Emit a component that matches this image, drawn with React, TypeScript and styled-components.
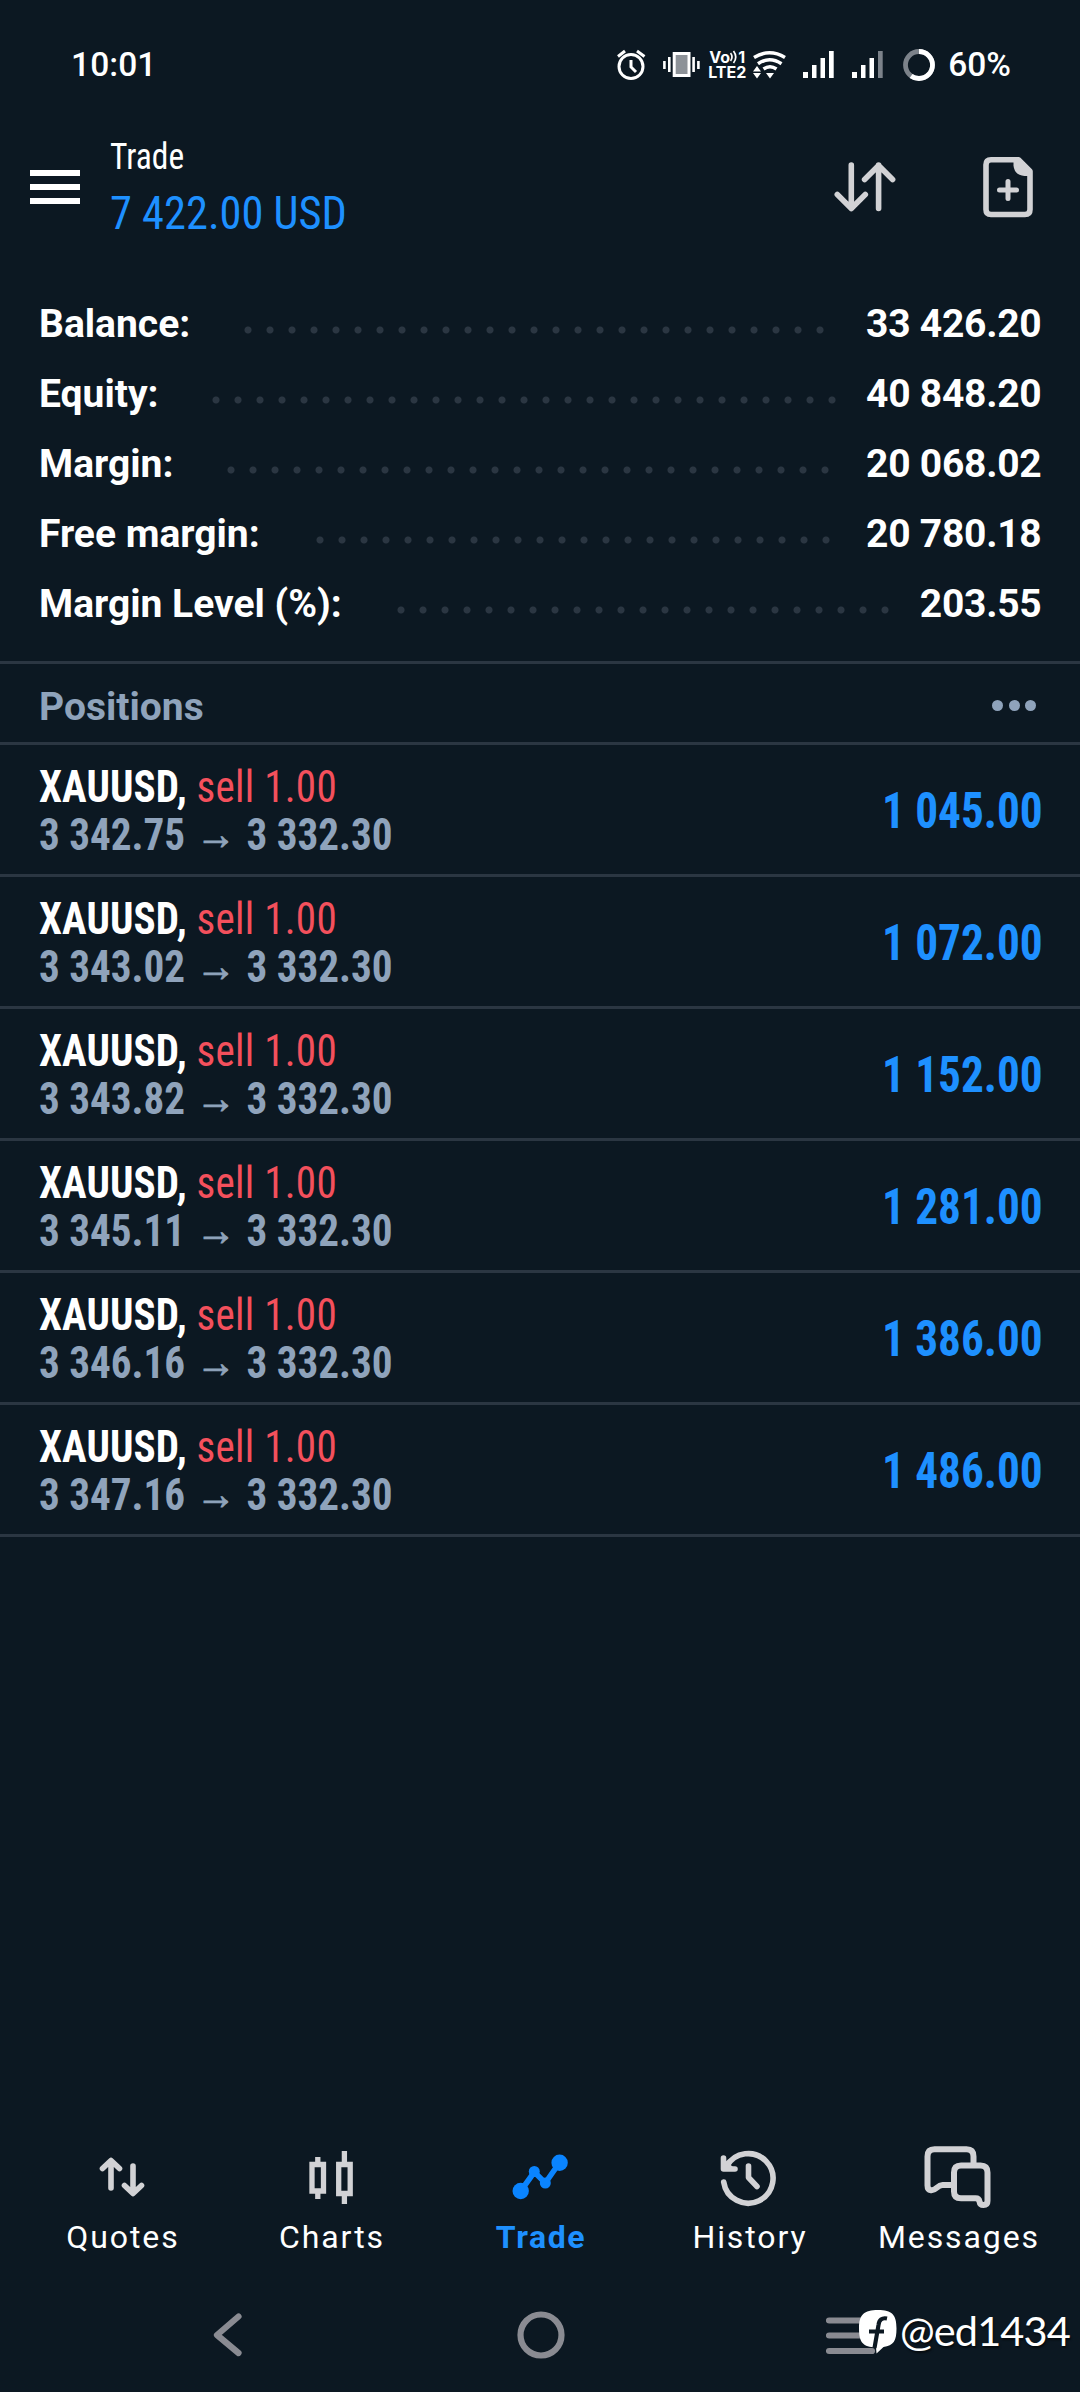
import React from "react";
import styled, { createGlobalStyle } from "styled-components";

const colors = {
  bg: "#0c1822",
  line: "#2b3642",
  blue: "#1e90ff",
  red: "#f4505c",
  muted: "#8fa3bb",
  icon: "#d2d2d5",
  nav: "#8a8b92",
};

const Global = createGlobalStyle`
  * { box-sizing: border-box; }
  body { margin: 0; background: ${colors.bg}; }
`;

const Screen = styled.div`
  display: flex;
  flex-direction: column;
  width: 1080px;
  height: 2392px;
  overflow: hidden;
  background: ${colors.bg};
  color: #fff;
  font-family: Roboto, "Noto Sans", sans-serif;
  white-space: nowrap;

  svg { display: block; flex: none; }
`;

/* ---------- status bar ---------- */

const StatusBar = styled.header`
  display: flex;
  align-items: center;
  justify-content: space-between;
  height: 129px;
  padding: 0 69px 0 71px;
  font-size: 33.5px;
  font-weight: 500;
`;

const Clock = styled.span`
  letter-spacing: 0.1px;
`;

const StatusIcons = styled.div`
  display: flex;
  align-items: center;
`;

const StatusSlot = styled.span<{ $before?: number }>`
  margin-left: ${(p) => p.$before ?? 0}px;
`;

/* ---------- header ---------- */

const Header = styled.div`
  display: flex;
  align-items: center;
  height: 116px;
  padding: 0 44px 0 30px;
`;

const Burger = styled.div`
  display: flex;
  flex-direction: column;
  gap: 8px;
  width: 50px;
  margin-right: 30px;
`;

const BurgerBar = styled.span`
  height: 6px;
  background: #fff;
`;

const Heading = styled.div`
  flex: 1;
  font-family: "Roboto Condensed", Roboto, sans-serif;
`;

const Title = styled.div`
  font-size: 36px;
  line-height: 52px;
  transform: scaleX(0.93);
  transform-origin: left;
`;

const Profit = styled.div`
  font-size: 46.5px;
  line-height: 60px;
  color: ${colors.blue};
  transform: scaleX(0.955);
  transform-origin: left;
`;

const HeaderIcons = styled.div`
  display: flex;
  align-items: center;
  gap: 86px;
`;

/* ---------- account summary ---------- */

const Summary = styled.section`
  padding: 44px 38.5px 22px 39px;
  border-bottom: 3px solid ${colors.line};
`;

const SummaryRow = styled.div`
  display: flex;
  align-items: center;
  height: 70px;
  font-size: 39px;
  font-weight: 700;
`;

const SummaryLabel = styled.span<{ $width: number }>`
  width: ${(p) => p.$width}px;
`;

const Leader = styled.span<{ $dots: number }>`
  width: ${(p) => p.$dots * 22}px;
  height: 8px;
  margin-top: 12px;
  background: radial-gradient(circle at 4px 4px, ${colors.line} 3px, transparent 4px) 0 0 / 22px 8px repeat-x;
`;

const SummaryValue = styled.span`
  margin-left: auto;
  letter-spacing: -0.25px;
`;

/* ---------- positions ---------- */

const SectionHead = styled.div`
  display: flex;
  align-items: center;
  justify-content: space-between;
  height: 81px;
  padding: 8px 44px 0 39px;
  border-bottom: 3px solid ${colors.line};
  color: ${colors.muted};
  font-size: 39px;
  font-weight: 700;
`;

const More = styled.div`
  display: flex;
  gap: 5.5px;
  margin-top: -4px;
`;

const MoreDot = styled.span`
  width: 11px;
  height: 11px;
  border-radius: 50%;
  background: ${colors.muted};
`;

const PositionRow = styled.div`
  display: flex;
  align-items: center;
  justify-content: space-between;
  height: 132px;
  padding: 3px 37px 0 39px;
  border-bottom: 3px solid ${colors.line};
  font-family: "Roboto Condensed", Roboto, sans-serif;
  font-weight: 700;
`;

const Deal = styled.div`
  font-size: 45px;
  line-height: 48px;
  transform: scaleX(0.914);
  transform-origin: left;
`;

const Symbol = styled.div`
  letter-spacing: 0.1px;
`;

const Side = styled.span`
  color: ${colors.red};
  font-weight: 400;
  letter-spacing: 0.3px;
`;

const Prices = styled.div`
  display: flex;
  color: ${colors.muted};
`;

const Arrow = styled.span`
  width: 67px;
  text-align: center;
  font-size: 44px;
  line-height: 47px;
  -webkit-text-stroke: 0.9px ${colors.muted};
`;

const Gain = styled.div`
  color: ${colors.blue};
  font-size: 50px;
  transform: scaleX(0.905);
  transform-origin: right;
`;

/* ---------- bottom bars ---------- */

const Spacer = styled.div`
  flex: 1;
`;

const Tabs = styled.nav`
  display: grid;
  grid-template-columns: repeat(5, 209px);
  justify-content: center;
`;

const Tab = styled.div<{ $active?: boolean }>`
  display: flex;
  flex-direction: column;
  align-items: center;
  gap: 4px;
  font-size: 32px;
  line-height: 40px;
  letter-spacing: ${(p) => (p.$active ? 1.6 : 1.9)}px;
  font-weight: ${(p) => (p.$active ? 700 : 400)};
  color: ${(p) => (p.$active ? colors.blue : "#fff")};
`;

const TabLabel = styled.span`
  padding-left: 2px;
`;

const SystemNav = styled.div`
  position: relative;
  display: flex;
  align-items: center;
  justify-content: space-between;
  height: 115px;
  margin-top: 20px;
  padding: 0 204px 0 207px;
`;

const Watermark = styled.div`
  position: absolute;
  left: 859px;
  top: 33px;
  display: flex;
  align-items: center;
  gap: 3px;
  text-shadow: 1px 2px 2px rgba(0, 0, 0, 0.6);
`;

const Handle = styled.span`
  margin-top: -5px;
  font-family: Lato, sans-serif;
  font-size: 41.5px;
  line-height: 48px;
  letter-spacing: -0.9px;
`;

/* ---------- icons ---------- */

const AlarmIcon = () => (
  <svg width="30" height="32" viewBox="615 48 30 32" fill="none" stroke="#fff" strokeWidth="3">
    <circle cx="630" cy="65.5" r="12" />
    <path d="M617 55.5l7-5.5M636 50l7.5 5.5M630 59v7l5 5" />
  </svg>
);

const VibrateIcon = () => (
  <svg width="38" height="28" viewBox="661 51 38 28" fill="none" stroke="#fff">
    <rect x="673.2" y="53.5" width="14.8" height="22" strokeWidth="3" fill="#8d9298" />
    <path d="M668.3 57v15M692.6 57v15" strokeWidth="2.6" />
    <path d="M663.4 61v8M697.4 61v8" strokeWidth="2.6" />
  </svg>
);

const Volte = styled.span`
  display: flex;
  flex-direction: column;
  width: 38px;
  font-family: Inter, sans-serif;
  font-size: 16px;
  line-height: 15px;
  font-weight: 700;
`;

const VolteTop = styled.span`
  display: flex;
  align-items: center;
  justify-content: space-between;
  padding: 0 1px;
`;

const VolteIcon = () => (
  <Volte>
    <VolteTop>
      <span>Vo</span>
      <svg width="8" height="14" viewBox="0 0 8 14" fill="none" stroke="#fff" strokeWidth="1.7">
        <path d="M0.500 3q3 4 0 8M3.500 1q4.500 6 0 12" />
      </svg>
      <span>1</span>
    </VolteTop>
    <span>LTE2</span>
  </Volte>
);

const WifiIcon = () => (
  <svg width="34" height="30" viewBox="751 50 34 30" fill="none" stroke="#fff" strokeWidth="3.5">
    <path d="M753 57.500q15.500-9.500 31 0M757 63.800q11.500-8 23.500 0M762.500 69q6.500-4.500 13 0" />
    <g fill="#fff" stroke="none">
      <path d="M765 73h8l-4 5.500zM752 71.500l4-5.500 4 5.500zM752 73h8l-4 5.500z" />
    </g>
  </svg>
);

const SignalIcon = ({ weak }: { weak?: boolean }) => (
  <svg width="31" height="27" viewBox="0 0 31 27" fill="#fff">
    <rect x="0" y="21" width="5" height="6" />
    <rect x="9" y="14" width="4.500" height="13" />
    <rect x="17.500" y="7" width="4.500" height="20" />
    <rect x="26" y="0" width="4.700" height="27" fill={weak ? "#7c828a" : "#fff"} />
  </svg>
);

const BatteryIcon = () => (
  <svg width="32" height="32" viewBox="-16 -16 32 32" fill="none" strokeWidth="4.800">
    <circle r="13.500" stroke="#7c828a" />
    <circle r="13.500" stroke="#fff" pathLength="100" strokeDasharray="60 100" transform="rotate(-90)" />
  </svg>
);

const SortIcon = () => (
  <svg width="62" height="50" viewBox="834 162 62 50" fill="none" stroke={colors.icon} strokeWidth="5.600" strokeLinecap="round" strokeLinejoin="round">
    <path d="M851.300 165v43.500M837.300 194.500l14 14 14-14M878.600 208.500v-43.500M864.600 179.500l14-14 14 14" />
  </svg>
);

const NewOrderIcon = () => (
  <svg width="54" height="64" viewBox="982 155 54 64" fill="none" stroke={colors.icon} strokeWidth="5.600" strokeLinecap="round" strokeLinejoin="round">
    <path d="M1018.500 159.800H991q-5 0-5 5V209.500q0 5 5 5H1025q5 0 5-5V171.300z" />
    <path d="M1013.500 158.500v7q1 10 11 10.500h7v-6l-12-11.500z" fill={colors.icon} stroke="none" />
    <path d="M999.500 190h17M1008 181.500v17" strokeWidth="5" />
  </svg>
);

const QuotesIcon = () => (
  <svg width="80" height="70" viewBox="82 2143 80 70" fill="none" stroke={colors.icon} strokeWidth="5.600" strokeLinecap="round" strokeLinejoin="round">
    <path d="M111 2188v-27M102.500 2168.500l8.500-8 8.500 8M133 2166v27M124.500 2185.500l8.500 8 8.500-8" />
  </svg>
);

const ChartsIcon = () => (
  <svg width="80" height="70" viewBox="291 2143 80 70" fill="none" stroke={colors.icon} strokeWidth="5.300">
    <path d="M312 2164.500h11.500v26.500H312zM317.800 2157v7M317.800 2191v8M338.700 2164.500h11.500v29H338.700zM344.400 2151v13M344.400 2194v10" />
  </svg>
);

const TradeIcon = () => (
  <svg width="80" height="70" viewBox="500 2143 80 70" fill="#0a84ff">
    <path d="M520.700 2191l13.600-19 11 11 14.300-20.500" fill="none" stroke="#0a84ff" strokeWidth="5.600" />
    <circle cx="520.700" cy="2191" r="8.200" />
    <circle cx="534.300" cy="2171.500" r="5.500" />
    <circle cx="545.300" cy="2183" r="5.500" />
    <circle cx="559.600" cy="2162.700" r="8.200" />
  </svg>
);

const HistoryIcon = () => (
  <svg width="80" height="70" viewBox="709.500 2143 80 70" fill="none" stroke={colors.icon} strokeWidth="5.600" strokeLinecap="round" strokeLinejoin="round">
    <path d="M724.200 2182A24.800 24.800 0 1 0 727 2166.500" />
    <path d="M724 2158v11h11.500" />
    <path d="M724 2158v11h11.500z" strokeWidth="3" fill={colors.icon} stroke="none" />
    <path d="M749 2166v11.500l8.500 9" />
  </svg>
);

const MessagesIcon = () => (
  <svg width="80" height="70" viewBox="8.500 8 80 70" fill="none" stroke={colors.icon} strokeWidth="6" strokeLinecap="butt" strokeLinejoin="round">
    <path d="M44.500 50H33C27.500 50 26.500 56 21.500 55.300Q18 54.800 18 50.500V21.500Q18 14.300 25 14.300H57Q64 14.300 64 21.500V29" />
    <path d="M44.500 37.500Q44.500 30.500 51.500 30.500H71Q78 30.500 78 37.500V66Q78 70 74 70Q70.500 70 70 66.500Q69.500 63.300 66 63.300H51.500Q44.500 63.300 44.500 56.500Z" />
  </svg>
);

const BackIcon = () => (
  <svg width="48" height="48" viewBox="207 2310.500 48 48" fill="none" stroke={colors.nav} strokeWidth="6.200" strokeLinecap="round" strokeLinejoin="round">
    <path d="M238.500 2316L217 2334.500l21.500 18" />
  </svg>
);

const HomeIcon = () => (
  <svg width="48" height="48" viewBox="-24 -24 48 48" fill="none" stroke={colors.nav} strokeWidth="6.200">
    <circle r="20.500" />
  </svg>
);

const RecentsIcon = () => (
  <svg width="50" height="48" viewBox="826 2311 50 48" fill="none" stroke={colors.nav} strokeWidth="6.200" strokeLinecap="round">
    <path d="M829 2320.500h43M829 2335.500h43M829 2351h43" />
  </svg>
);

const BadgeIcon = () => (
  <svg width="38" height="44" viewBox="0 0 38 44">
    <path d="M19 0C33 0 37.500 4.500 37.500 18.500C37.500 31 34.500 35.500 24.500 37L17.500 43.500L17 37.500C4 37 0 32.500 0 18.500C0 4.500 5 0 19 0Z" fill="#fff" />
    <path d="M28 8.500Q20.500 7 19.500 15L15.500 38M10 21.500h15" fill="none" stroke={colors.bg} strokeWidth="4.200" />
  </svg>
);

/* ---------- data ---------- */

const summary = [
  { label: "Balance:", value: "33 426.20", labelWidth: 204.5, dots: 27 },
  { label: "Equity:", value: "40 848.20", labelWidth: 172.5, dots: 29 },
  { label: "Margin:", value: "20 068.02", labelWidth: 187.5, dots: 28 },
  { label: "Free margin:", value: "20 780.18", labelWidth: 276.5, dots: 24 },
  { label: "Margin Level (%):", value: "203.55", labelWidth: 357.5, dots: 23 },
];

const positions = [
  { open: "3 342.75", profit: "1 045.00" },
  { open: "3 343.02", profit: "1 072.00" },
  { open: "3 343.82", profit: "1 152.00" },
  { open: "3 345.11", profit: "1 281.00" },
  { open: "3 346.16", profit: "1 386.00" },
  { open: "3 347.16", profit: "1 486.00" },
];

const tabs = [
  { label: "Quotes", Icon: QuotesIcon },
  { label: "Charts", Icon: ChartsIcon },
  { label: "Trade", Icon: TradeIcon, active: true },
  { label: "History", Icon: HistoryIcon },
  { label: "Messages", Icon: MessagesIcon },
];

export default function App() {
  return (
    <Screen>
      <Global />
      <StatusBar>
        <Clock>10:01</Clock>
        <StatusIcons>
          <StatusSlot><AlarmIcon /></StatusSlot>
          <StatusSlot $before={16}><VibrateIcon /></StatusSlot>
          <StatusSlot $before={8}><VolteIcon /></StatusSlot>
          <StatusSlot $before={6}><WifiIcon /></StatusSlot>
          <StatusSlot $before={17}><SignalIcon /></StatusSlot>
          <StatusSlot $before={18}><SignalIcon weak /></StatusSlot>
          <StatusSlot $before={20}><BatteryIcon /></StatusSlot>
          <StatusSlot $before={13}>60%</StatusSlot>
        </StatusIcons>
      </StatusBar>

      <Header>
        <Burger>
          <BurgerBar />
          <BurgerBar />
          <BurgerBar />
        </Burger>
        <Heading>
          <Title>Trade</Title>
          <Profit>7 422.00 USD</Profit>
        </Heading>
        <HeaderIcons>
          <SortIcon />
          <NewOrderIcon />
        </HeaderIcons>
      </Header>

      <Summary>
        {summary.map((row) => (
          <SummaryRow key={row.label}>
            <SummaryLabel $width={row.labelWidth}>{row.label}</SummaryLabel>
            <Leader $dots={row.dots} />
            <SummaryValue>{row.value}</SummaryValue>
          </SummaryRow>
        ))}
      </Summary>

      <SectionHead>
        Positions
        <More>
          <MoreDot />
          <MoreDot />
          <MoreDot />
        </More>
      </SectionHead>

      {positions.map((p) => (
        <PositionRow key={p.open}>
          <Deal>
            <Symbol>
              XAUUSD, <Side>sell 1.00</Side>
            </Symbol>
            <Prices>
              <span>{p.open}</span>
              <Arrow>→</Arrow>
              <span>3 332.30</span>
            </Prices>
          </Deal>
          <Gain>{p.profit}</Gain>
        </PositionRow>
      ))}

      <Spacer />

      <Tabs>
        {tabs.map(({ label, Icon, active }) => (
          <Tab key={label} $active={active}>
            <Icon />
            <TabLabel>{label}</TabLabel>
          </Tab>
        ))}
      </Tabs>

      <SystemNav>
        <BackIcon />
        <HomeIcon />
        <RecentsIcon />
        <Watermark>
          <BadgeIcon />
          <Handle>@ed1434</Handle>
        </Watermark>
      </SystemNav>
    </Screen>
  );
}
